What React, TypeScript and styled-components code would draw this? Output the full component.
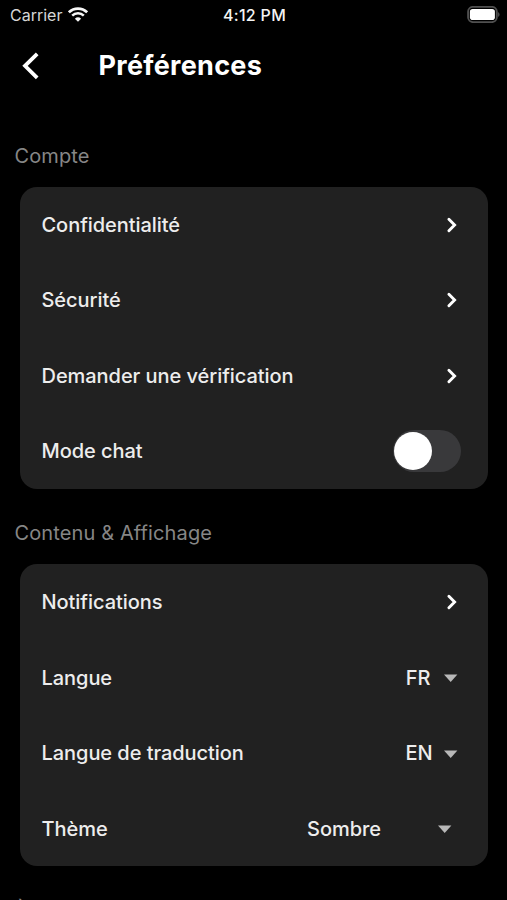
import React from 'react';
import styled, { createGlobalStyle } from 'styled-components';

const Global = createGlobalStyle`
  * { box-sizing: border-box; }
  body { margin: 0; background: #000; overflow: hidden; }
`;
const Screen = styled.main`
  width: 507px; height: 900px; overflow: hidden; background: #000; color: #ededed;
  font-family: Inter, "Liberation Sans", sans-serif;
`;
const StatusBar = styled.div`
  height: 30px; display: grid; grid-template-columns: 1fr auto 1fr; align-items: center;
  padding: 0 7px 0 10px; font-size: 16px; line-height: 30px;
`;
const Carrier = styled.div`
  display: flex; align-items: center; gap: 6px; color: #d6d6d6;
  svg { margin-top: -1px; }
`;
const Clock = styled.div`font-weight: 550; color: #f4f4f4; letter-spacing: 0.3px; margin-left: -1px;`;
const BatteryWrap = styled.div`display: flex; justify-content: flex-end; padding-bottom: 2px;`;
const Header = styled.header`
  height: 72px; display: flex; align-items: center; padding-left: 20px; gap: 56.6px;
`;
const Title = styled.h1`
  margin: 0; font-size: 27px; line-height: 72px; font-weight: 700; color: #fff; letter-spacing: 0.27px;
`;
const SectionLabel = styled.h2<{ $top: number }>`
  margin: ${p => p.$top}px 0 0 14.5px; height: 24px; font-size: 20px; line-height: 24px;
  font-weight: 400; color: #868686; letter-spacing: 0.12px;
`;
const Card = styled.section`
  margin: 19px 19px 0 20px; height: 302px; border-radius: 17px; background: #212121;
  display: grid; grid-template-rows: repeat(4, 1fr);
`;
const Row = styled.div<{ $right?: number }>`
  display: flex; align-items: center; justify-content: space-between;
  padding: 0 ${p => p.$right ?? 30.5}px 0 21.5px; font-size: 20px; font-weight: 500; letter-spacing: -0.05px;
`;
const Label = styled.span``;
const Value = styled.span<{ $gap: number }>`
  display: flex; align-items: center; gap: ${p => p.$gap}px;
  svg { margin-top: 1px; }
`;
const Toggle = styled.div`
  width: 68px; height: 42px; border-radius: 21px; background: #39393b; padding: 2px 1px;
`;
const Knob = styled.div`width: 38px; height: 38px; border-radius: 50%; background: #fff;`;

const Chevron = () => (
  <svg width="12" height="16" viewBox="0 0 12 16">
    <path d="M2.900 2.200 8.600 8l-5.700 5.800" fill="none" stroke="#fff" strokeWidth="2.900" strokeLinecap="round" />
  </svg>
);
const Caret = () => (
  <svg width="14" height="8" viewBox="0 0 14 8"><path d="M0 .4h13.400L6.700 7.900z" fill="#b8b8b8" /></svg>
);
const Wifi = () => (
  <svg width="20" height="15" viewBox="0 0 20 15" fill="none" stroke="#f6f6f6">
    <path d="M.9 5.300a13 13 0 0 1 18.200 0" strokeWidth="2.600" />
    <path d="M4.200 8.700a8.300 8.300 0 0 1 11.600 0" strokeWidth="2.500" />
    <path d="M10 14.800 6.900 11.700a4.500 4.500 0 0 1 6.200 0z" fill="#f6f6f6" stroke="none" />
  </svg>
);
const Battery = () => (
  <svg width="33" height="17" viewBox="0 0 33 17">
    <rect x="1.100" y=".9" width="28.700" height="15.200" rx="4.800" fill="none" stroke="#505050" strokeWidth="1.900" />
    <rect x="2.900" y="3" width="25" height="11" rx="2.800" fill="#fff" />
    <path d="M31.200 6.200c1.700.7 1.700 3.900 0 4.600z" fill="#5a5a5a" />
  </svg>
);

export default function App() {
  return (
    <Screen>
      <Global />
      <StatusBar>
        <Carrier>Carrier<Wifi /></Carrier>
        <Clock>4:12 PM</Clock>
        <BatteryWrap><Battery /></BatteryWrap>
      </StatusBar>
      <Header>
        <svg width="22" height="30" viewBox="0 0 22 30">
          <path d="M17.200 2.800 5 14.800l12.200 12" fill="none" stroke="#fff" strokeWidth="3.800" />
        </svg>
        <Title>Préférences</Title>
      </Header>
      <SectionLabel $top={42}>Compte</SectionLabel>
      <Card>
        <Row><Label>Confidentialité</Label><Chevron /></Row>
        <Row><Label>Sécurité</Label><Chevron /></Row>
        <Row><Label>Demander une vérification</Label><Chevron /></Row>
        <Row $right={27}><Label>Mode chat</Label><Toggle><Knob /></Toggle></Row>
      </Card>
      <SectionLabel $top={32.4}>Contenu &amp; Affichage</SectionLabel>
      <Card>
        <Row><Label>Notifications</Label><Chevron /></Row>
        <Row><Label>Langue</Label><Value $gap={13}>FR<Caret /></Value></Row>
        <Row><Label>Langue de traduction</Label><Value $gap={11}>EN<Caret /></Value></Row>
        <Row $right={36}><Label>Thème</Label><Value $gap={57}>Sombre<Caret /></Value></Row>
      </Card>
      <SectionLabel $top={32.6}>À propos</SectionLabel>
    </Screen>
  );
}
